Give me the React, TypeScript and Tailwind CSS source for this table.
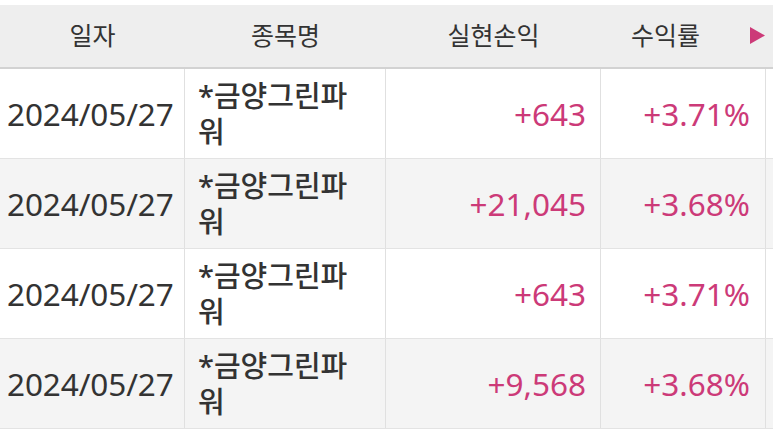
import React from "react";

const rows = [
  { date: "2024/05/27", pl: "+643", rate: "+3.71%" },
  { date: "2024/05/27", pl: "+21,045", rate: "+3.68%" },
  { date: "2024/05/27", pl: "+643", rate: "+3.71%" },
  { date: "2024/05/27", pl: "+9,568", rate: "+3.68%" },
];

const font = { fontFamily: '"Noto Sans", "Noto Sans CJK KR", sans-serif' };

export default function App() {
  return (
    <div className="w-[773px] h-[429px] overflow-hidden bg-white pt-[5px] text-[#333333]" style={font}>
      <div className="grid grid-cols-[185px_201px_215px_165px_1fr] h-[64px] bg-[#eeeeee] border-b-2 border-[#d2d2d2] text-[25px] items-center">
        <div className="text-center">일자</div>
        <div className="text-center">종목명</div>
        <div className="text-center">실현손익</div>
        <div className="relative h-full flex items-center justify-center pr-[36px]">
          수익률
          <svg className="absolute right-[1px] top-[22px]" width="15" height="17" viewBox="0 0 15 17">
            <polygon points="0,0 15,8.5 0,17" fill="#cc3a78" />
          </svg>
        </div>
        <div />
      </div>
      {rows.map((r, i) => (
        <div
          key={i}
          className={`grid grid-cols-[185px_201px_215px_165px_1fr] h-[90px] border-b border-[#e3e3e3] font-[450] ${i % 2 === 1 ? "bg-[#f4f4f4]" : "bg-white"}`}
        >
          <div className="flex items-center pl-[7px] border-r border-[#e0e0e0] text-[31.5px] tracking-[-0.1px]">{r.date}</div>
          <div className="flex items-center pl-[13px] border-r border-[#e0e0e0] text-[29px] leading-[36px] font-medium">
            <div>
              *금양그린파
              <br />워
            </div>
          </div>
          <div className="flex items-center justify-end pr-[14px] border-r border-[#e0e0e0] text-[31.5px] text-[#cc3a78]">{r.pl}</div>
          <div className="flex items-center justify-end pr-[15px] border-r border-[#e0e0e0] text-[31.5px] text-[#cc3a78]">{r.rate}</div>
          <div />
        </div>
      ))}
    </div>
  );
}
